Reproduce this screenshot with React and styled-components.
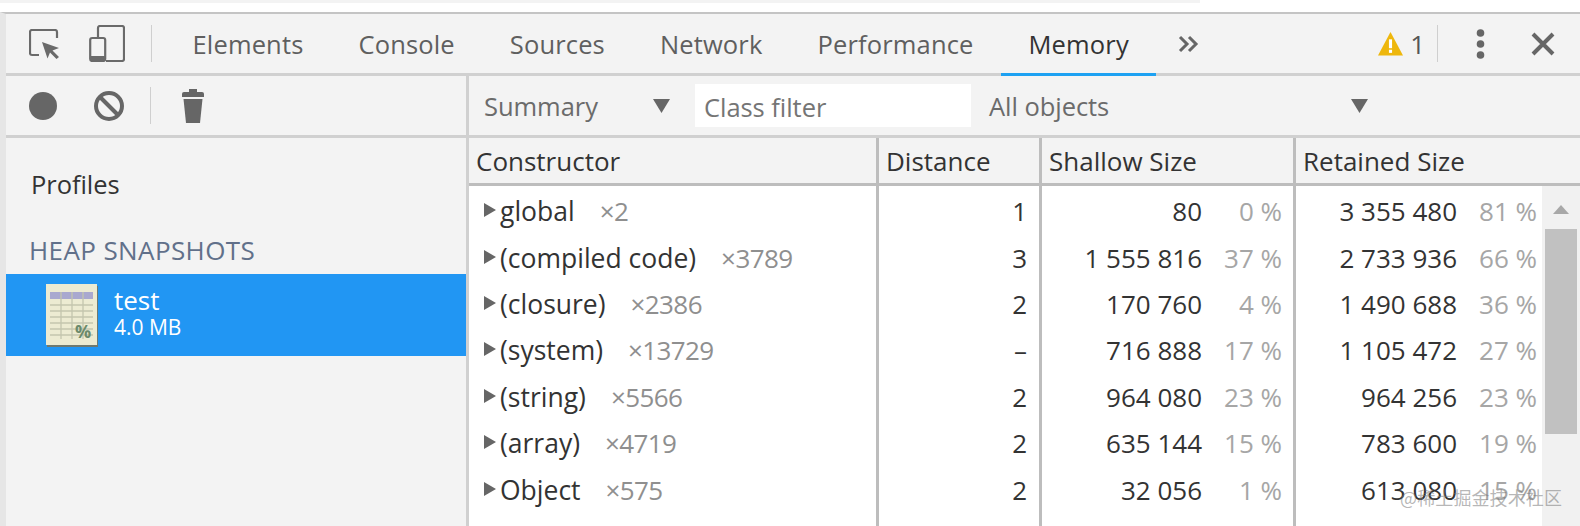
import React from "react";
import styled, { createGlobalStyle } from "styled-components";

const GlobalStyle = createGlobalStyle`
  html, body {
    margin: 0;
    padding: 0;
    background: #fff;
  }
  body {
    font-family: "Open Sans", "Noto Sans", sans-serif;
    overflow: hidden;
  }
`;

const Page = styled.div`
  position: relative;
  width: 1580px;
  height: 526px;
  background: #fff;
  overflow: hidden;
`;

const TopStrip = styled.div`
  width: 1200px;
  height: 3px;
  margin-bottom: 9px;
  background: #f3f3f3;
`;

const Devtools = styled.div`
  height: 514px;
  box-sizing: border-box;
  border-top: 2px solid #c4c4c4;
  border-left: 6px solid #e6e6e6;
  display: flex;
  flex-direction: column;
  background: #f3f3f3;
`;

const TabBar = styled.div`
  height: 62px;
  flex: none;
  box-sizing: border-box;
  border-bottom: 3px solid #d0d0d0;
  display: flex;
  align-items: stretch;
`;

const TabIcons = styled.div`
  width: 159px;
  flex: none;
  display: flex;
  align-items: center;
  padding-left: 23px;
  box-sizing: border-box;
`;

const VLine = styled.div`
  width: 1px;
  height: ${(p) => p.$h || 37}px;
  background: #cfcfcf;
  flex: none;
`;

const Slot = styled.div`
  display: flex;
  align-items: center;
  flex: none;
  margin-left: ${(p) => p.$ml || 0}px;
`;

const Tab = styled.div`
  position: relative;
  padding: 1px 27.5px 0;
  display: flex;
  align-items: center;
  font-size: 25.5px;
  letter-spacing: 0.15px;
  color: ${(p) => (p.$active ? "#333" : "#5f5f5f")};

  ${(p) =>
    p.$active &&
    `&::after {
      content: "";
      position: absolute;
      left: 0;
      right: 0;
      bottom: -3px;
      height: 3px;
      background: #1da1f2;
    }`}
`;

const More = styled.div`
  margin-left: 22px;
  display: flex;
  align-items: center;
`;

const TabRight = styled.div`
  margin-left: auto;
  display: flex;
  align-items: center;
  padding-right: 25px;
`;

const WarnCount = styled.span`
  font-size: 26px;
  color: #555;
  margin: 0 12px 0 7px;
`;

const Body = styled.div`
  flex: 1;
  display: flex;
  min-height: 0;
`;

const Sidebar = styled.div`
  width: 460px;
  flex: none;
  border-right: 3px solid #d0d0d0;
  display: flex;
  flex-direction: column;
`;

const Toolbar = styled.div`
  height: 62px;
  flex: none;
  box-sizing: border-box;
  border-bottom: 3px solid #d0d0d0;
  display: flex;
  align-items: center;
`;

const SideTools = styled(Toolbar)`
  padding-left: 23px;
`;

const ProfilesTitle = styled.div`
  font-size: 25.5px;
  color: #333;
  padding: 29px 0 0 25px;
  height: 46px;
  letter-spacing: -0.05px;
`;

const SectionTitle = styled.div`
  font-size: 26px;
  letter-spacing: 0.4px;
  color: #61708a;
  padding: 19px 0 0 23px;
  height: 42px;
`;

const Snapshot = styled.div`
  height: 82px;
  background: #2196f3;
  color: #fff;
  display: flex;
  align-items: center;
  padding-left: 40px;
  gap: 16px;
`;

const SnapText = styled.div`
  padding-bottom: 4px;
`;

const SnapName = styled.div`
  font-size: 26px;
  line-height: 27px;
`;

const SnapSize = styled.div`
  font-size: 21px;
  line-height: 26px;
`;

const Main = styled.div`
  flex: 1;
  min-width: 0;
  display: flex;
  flex-direction: column;
`;

const FilterBar = styled(Toolbar)`
  padding-left: 15px;
  font-size: 25.5px;
  letter-spacing: -0.05px;
  color: #6b6b6b;
`;

const Select = styled.div`
  width: ${(p) => p.$w}px;
  display: flex;
  align-items: center;
  justify-content: space-between;
  box-sizing: border-box;
  padding-top: 1px;
`;

const FilterInput = styled.div`
  width: 276px;
  height: 43px;
  margin: 0 18px 0 25px;
  padding: 3px 0 0 9px;
  box-sizing: border-box;
  background: #fff;
  color: #757575;
  display: flex;
  align-items: center;
`;

const Row = styled.div`
  display: grid;
  grid-template-columns: 410px 163px 254px 1fr;
  height: 46.4px;
  box-sizing: border-box;
`;

const HeadRow = styled(Row)`
  height: 48px;
  flex: none;
  background: #f3f3f3;
  border-bottom: 3px solid #bdbdbd;
`;

const HeadCell = styled.div`
  font-size: 26px;
  color: #333;
  display: flex;
  align-items: center;
  padding-left: 7px;
  border-right: ${(p) => (p.$last ? "none" : "3px solid #bdbdbd")};
`;

const Grid = styled.div`
  position: relative;
  flex: 1;
  min-height: 0;
  background: #fff;
  overflow: hidden;
  padding-top: 2px;
`;

const Cell = styled.div`
  display: flex;
  align-items: center;
  justify-content: ${(p) => (p.$num ? "flex-end" : "flex-start")};
  font-size: 26px;
  color: #333;
  white-space: nowrap;
  padding-right: ${(p) => p.$pr || 0}px;
  padding-left: ${(p) => p.$pl || 0}px;
`;

const Name = styled.span`
  font-size: 26.5px;
`;

const ColumnLines = styled.div`
  position: absolute;
  inset: 0;
  display: grid;
  grid-template-columns: 410px 163px 254px 1fr;
  pointer-events: none;
`;

const ColumnLine = styled.div`
  border-right: 3px solid #bdbdbd;
`;

const Arrow = styled.span`
  width: 0;
  height: 0;
  margin-right: 4px;
  border-left: 12px solid #666;
  border-top: 7.5px solid transparent;
  border-bottom: 7.5px solid transparent;
  flex: none;
  position: relative;
  top: -1px;
`;

const Count = styled.span`
  color: #8f8f8f;
  margin-left: 25px;
  letter-spacing: -0.6px;
`;

const Size = styled.span`
  flex: none;
`;

const Pct = styled.span`
  flex: none;
  width: 80px;
  text-align: right;
  color: #a6a6a6;
`;

const Scrollbar = styled.div`
  position: absolute;
  top: 0;
  right: 0;
  bottom: 0;
  width: 38px;
  background: #f1f1f1;
  display: flex;
  flex-direction: column;
  align-items: center;
`;

const ScrollUp = styled.div`
  margin-top: 19px;
  width: 0;
  height: 0;
  border-left: 8px solid transparent;
  border-right: 8px solid transparent;
  border-bottom: 9px solid #a8a8a8;
`;

const ScrollThumb = styled.div`
  margin-top: 15px;
  width: 32px;
  height: 205px;
  background: #c1c1c1;
`;

const Watermark = styled.div`
  position: absolute;
  right: 18px;
  bottom: 16px;
  font-family: "Noto Sans CJK SC", "Open Sans", sans-serif;
  font-size: 18px;
  color: rgba(120, 120, 120, 0.55);
  letter-spacing: 0.1px;
`;

const rows = [
  ["global", "×2", "1", "80", "0 %", "3 355 480", "81 %"],
  ["(compiled code)", "×3789", "3", "1 555 816", "37 %", "2 733 936", "66 %"],
  ["(closure)", "×2386", "2", "170 760", "4 %", "1 490 688", "36 %"],
  ["(system)", "×13729", "–", "716 888", "17 %", "1 105 472", "27 %"],
  ["(string)", "×5566", "2", "964 080", "23 %", "964 256", "23 %"],
  ["(array)", "×4719", "2", "635 144", "15 %", "783 600", "19 %"],
  ["Object", "×575", "2", "32 056", "1 %", "613 080", "15 %"],
];

function InspectIcon() {
  return (
    <svg width="31" height="30" viewBox="0 0 31 30" fill="none">
      <path d="M10 26H3a2 2 0 0 1-2-2V3a2 2 0 0 1 2-2h23a2 2 0 0 1 2 2v6" stroke="#6a6a6a" strokeWidth="2.2" />
      <path d="M13 13l17 6-6.5 2.5 6.5 6.5-2.5 2-6.5-6.5-2.5 6z" fill="#6a6a6a" />
    </svg>
  );
}

function DeviceIcon() {
  return (
    <svg width="36" height="37" viewBox="0 0 36 37" fill="none">
      <path d="M9 12V3a2 2 0 0 1 2-2h22a2 2 0 0 1 2 2v31a2 2 0 0 1-2 2H17" stroke="#6a6a6a" strokeWidth="2.2" />
      <rect x="1.2" y="13" width="15" height="23" rx="2" stroke="#6a6a6a" strokeWidth="2.2" />
      <rect x="1.2" y="31" width="15" height="5" fill="#6a6a6a" />
    </svg>
  );
}

function MoreIcon() {
  return (
    <svg width="21" height="18" viewBox="0 0 21 18" fill="none" stroke="#666" strokeWidth="3">
      <path d="M2 2l7 7-7 7M11 2l7 7-7 7" />
    </svg>
  );
}

function WarnIcon() {
  return (
    <svg width="25" height="25" viewBox="0 0 24 24">
      <path d="M12 1L24 23.5H0z" fill="#eeb70c" />
      <rect x="10.5" y="8" width="3" height="8.5" fill="#fff" />
      <rect x="10.5" y="18" width="3" height="3" fill="#fff" />
    </svg>
  );
}

function KebabIcon() {
  return (
    <svg width="9" height="30" viewBox="0 0 9 30" fill="#666">
      <circle cx="4.5" cy="4" r="3.8" />
      <circle cx="4.5" cy="15" r="3.8" />
      <circle cx="4.5" cy="26" r="3.8" />
    </svg>
  );
}

function CloseIcon() {
  return (
    <svg width="24" height="24" viewBox="0 0 24 24" stroke="#666" strokeWidth="4">
      <path d="M2 2l20 20M22 2L2 22" />
    </svg>
  );
}

function RecordIcon() {
  return (
    <svg width="28" height="28" viewBox="0 0 28 28">
      <circle cx="14" cy="14" r="14" fill="#666" />
    </svg>
  );
}

function ClearIcon() {
  return (
    <svg width="32" height="32" viewBox="0 0 32 32" fill="none" stroke="#666" strokeWidth="4">
      <circle cx="16" cy="16" r="13" />
      <path d="M7 7l18 18" />
    </svg>
  );
}

function TrashIcon() {
  return (
    <svg width="22" height="34" viewBox="0 0 22 34" fill="#666">
      <rect x="7" y="0" width="8" height="3" />
      <path d="M2 3h18a2 2 0 0 1 2 2v3H0V5a2 2 0 0 1 2-2z" />
      <path d="M1.5 10h19L18 34H4z" />
    </svg>
  );
}

function CaretDown() {
  return (
    <svg width="17" height="14" viewBox="0 0 17 14">
      <path d="M0 0h17L8.5 14z" fill="#666" />
    </svg>
  );
}

function SnapshotIcon() {
  return (
    <svg width="52" height="63" viewBox="0 0 52 63">
      <rect x="1" y="2" width="51" height="61" fill="#6f7a70" />
      <rect x="0" y="0" width="51" height="61" fill="#ecebd2" />
      <rect x="4" y="8" width="43" height="7" fill="#a9a9cf" />
      <g stroke="#c4c6ae" strokeWidth="1.3">
        <path d="M4 21h43M4 27h43M4 33h43M4 39h43M4 45h43M4 51h43" />
        <path d="M15 8v47M26 8v47M37 8v47" />
      </g>
      <text x="29" y="54" fontSize="18" fontWeight="700" fontFamily="Open Sans, sans-serif" fill="#6b8a6b">%</text>
    </svg>
  );
}

function App() {
  const tabs = ["Elements", "Console", "Sources", "Network", "Performance"];
  return (
    <Page>
      <GlobalStyle />
      <TopStrip />
      <Devtools>
        <TabBar>
          <TabIcons>
            <InspectIcon />
            <Slot $ml={29}>
              <DeviceIcon />
            </Slot>
            <Slot $ml={26}>
              <VLine />
            </Slot>
          </TabIcons>
          {tabs.map((t) => (
            <Tab key={t}>{t}</Tab>
          ))}
          <Tab $active>Memory</Tab>
          <More>
            <MoreIcon />
          </More>
          <TabRight>
            <WarnIcon />
            <WarnCount>1</WarnCount>
            <VLine />
            <Slot $ml={38}>
              <KebabIcon />
            </Slot>
            <Slot $ml={46}>
              <CloseIcon />
            </Slot>
          </TabRight>
        </TabBar>
        <Body>
          <Sidebar>
            <SideTools>
              <RecordIcon />
              <Slot $ml={36}>
                <ClearIcon />
              </Slot>
              <Slot $ml={25}>
                <VLine />
              </Slot>
              <Slot $ml={31}>
                <TrashIcon />
              </Slot>
            </SideTools>
            <ProfilesTitle>Profiles</ProfilesTitle>
            <SectionTitle>HEAP SNAPSHOTS</SectionTitle>
            <Snapshot>
              <SnapshotIcon />
              <SnapText>
                <SnapName>test</SnapName>
                <SnapSize>4.0 MB</SnapSize>
              </SnapText>
            </Snapshot>
          </Sidebar>
          <Main>
            <FilterBar>
              <Select $w={186}>
                Summary
                <CaretDown />
              </Select>
              <FilterInput>Class filter</FilterInput>
              <Select $w={379}>
                All objects
                <CaretDown />
              </Select>
            </FilterBar>
            <HeadRow>
              <HeadCell>Constructor</HeadCell>
              <HeadCell>Distance</HeadCell>
              <HeadCell>Shallow Size</HeadCell>
              <HeadCell $last>Retained Size</HeadCell>
            </HeadRow>
            <Grid>
              {rows.map((r) => (
                <Row key={r[0]}>
                  <Cell $pl={15}>
                    <Arrow />
                    <Name>{r[0]}</Name>
                    <Count>{r[1]}</Count>
                  </Cell>
                  <Cell $num $pr={15}>{r[2]}</Cell>
                  <Cell $num $pr={14}>
                    <Size>{r[3]}</Size>
                    <Pct>{r[4]}</Pct>
                  </Cell>
                  <Cell $num $pr={43}>
                    <Size>{r[5]}</Size>
                    <Pct>{r[6]}</Pct>
                  </Cell>
                </Row>
              ))}
              <ColumnLines>
                <ColumnLine />
                <ColumnLine />
                <ColumnLine />
              </ColumnLines>
              <Scrollbar>
                <ScrollUp />
                <ScrollThumb />
              </Scrollbar>
            </Grid>
          </Main>
        </Body>
      </Devtools>
      <Watermark>@稀土掘金技术社区</Watermark>
    </Page>
  );
}

export default App;
